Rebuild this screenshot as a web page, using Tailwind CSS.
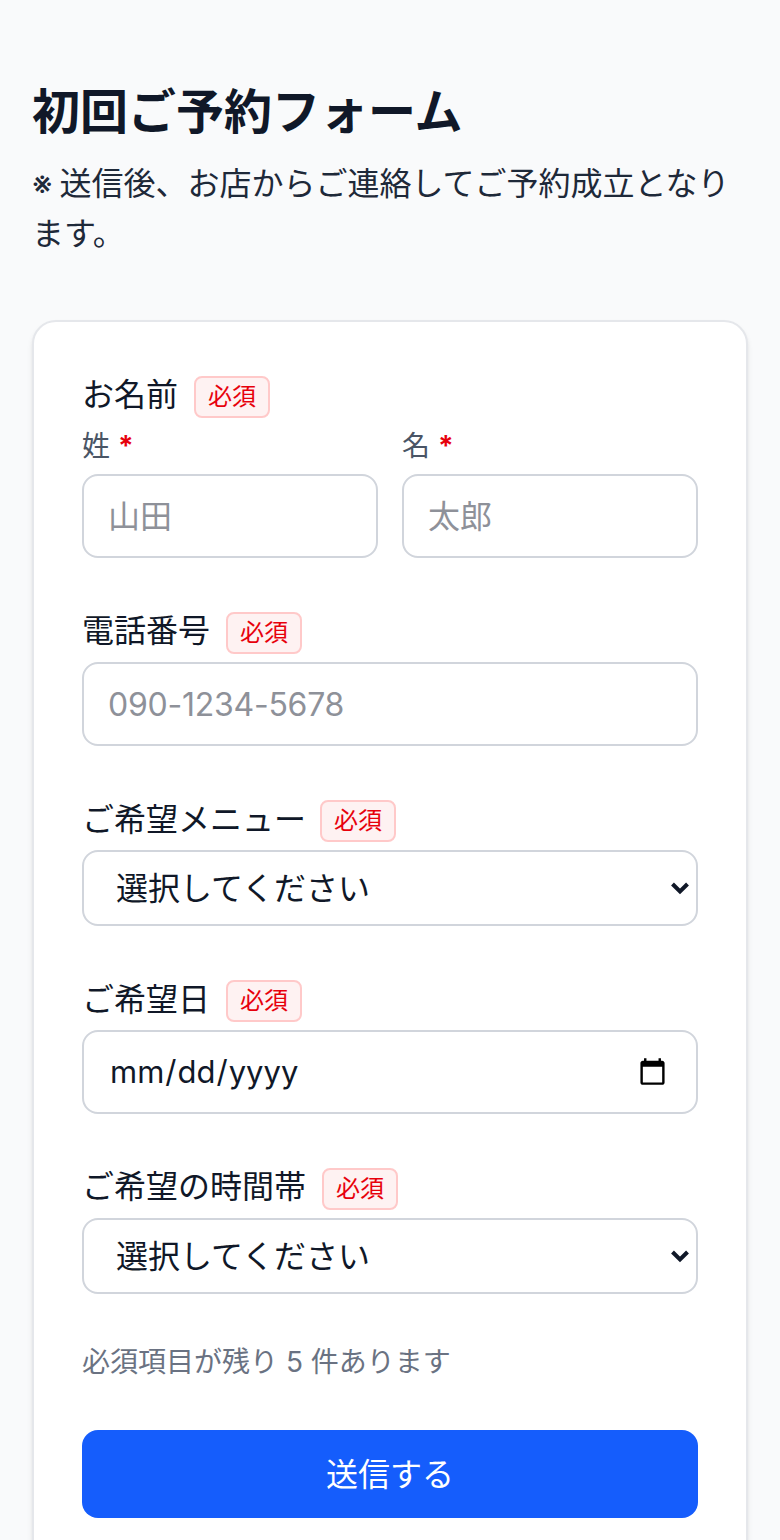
<!DOCTYPE html>
<html lang="ja">
<head>
  <meta charset="UTF-8" />
  <meta name="viewport" content="width=device-width, initial-scale=1.0"/>
  <title>初回ご予約フォーム</title>
  <script src="https://cdn.jsdelivr.net/npm/@tailwindcss/browser@4"></script>
</head>
<body class="bg-gray-50 h-[1540px] overflow-hidden font-['Inter','Noto_Sans_CJK_JP',sans-serif] text-gray-900">
  <main class="px-[32px] pt-[80px]">
    <!-- Heading -->
    <h1 class="text-[48px] leading-[64px] font-bold">初回ご予約フォーム</h1>
    <p class="mt-[15px] text-[32px] leading-[50px] text-gray-800 [word-spacing:-2px]">※ 送信後、お店からご連絡してご予約成立となります。</p>

    <!-- Form card -->
    <form class="mt-[61px] bg-white border-2 border-gray-200 rounded-[24px] shadow-md px-[48px] pt-[52px] pb-[48px]">
      <!-- Name -->
      <div class="flex items-center gap-[16px] h-[46px]">
        <span class="text-[32px] pb-[4px]">お名前</span>
        <span class="h-[42px] px-[12px] flex items-center text-[24px] text-red-600 bg-red-50 border-2 border-red-200 rounded-[8px]">必須</span>
      </div>
      <div class="grid grid-cols-2 gap-[24px] mt-[6px]">
        <div>
          <label class="block text-[28px] leading-[40px] text-gray-600">姓 <span class="font-bold text-red-600">*</span></label>
          <input type="text" placeholder="山田" class="mt-[8px] w-full h-[84px] px-[24px] text-[32px] bg-white border-2 border-gray-300 rounded-[16px] placeholder:text-[#8e9199]">
        </div>
        <div>
          <label class="block text-[28px] leading-[40px] text-gray-600">名 <span class="font-bold text-red-600">*</span></label>
          <input type="text" placeholder="太郎" class="mt-[8px] w-full h-[84px] px-[24px] text-[32px] bg-white border-2 border-gray-300 rounded-[16px] placeholder:text-[#8e9199]">
        </div>
      </div>

      <!-- Phone -->
      <div class="flex items-center gap-[16px] h-[46px] mt-[52px]">
        <span class="text-[32px] pb-[4px]">電話番号</span>
        <span class="h-[42px] px-[12px] flex items-center text-[24px] text-red-600 bg-red-50 border-2 border-red-200 rounded-[8px]">必須</span>
      </div>
      <input type="tel" placeholder="090-1234-5678" class="mt-[6px] w-full h-[84px] px-[24px] text-[32px] tracking-[-0.25px] bg-white border-2 border-gray-300 rounded-[16px] placeholder:text-[#8e9199]">

      <!-- Menu -->
      <div class="flex items-center gap-[14px] h-[46px] mt-[52px]">
        <span class="text-[32px] pb-[2px]">ご希望メニュー</span>
        <span class="h-[42px] px-[12px] flex items-center text-[24px] text-red-600 bg-red-50 border-2 border-red-200 rounded-[8px]">必須</span>
      </div>
      <div class="relative mt-[6px]">
        <select class="appearance-none w-full h-[76px] pl-[32px] pt-[2px] text-[32px] bg-white border-2 border-gray-300 rounded-[16px]">
          <option>選択してください</option>
        </select>
        <svg class="absolute right-[8px] top-[31px] w-[20px] h-[14px]" viewBox="0 0 20 14" fill="none"><path d="M2.5 3 10 10.500 17.500 3" stroke="#101828" stroke-width="4"/></svg>
      </div>

      <!-- Date -->
      <div class="flex items-center gap-[16px] h-[46px] mt-[52px]">
        <span class="text-[32px] pb-[2px]">ご希望日</span>
        <span class="h-[42px] px-[12px] flex items-center text-[24px] text-red-600 bg-red-50 border-2 border-red-200 rounded-[8px]">必須</span>
      </div>
      <input type="date" class="mt-[6px] block w-full h-[84px] pl-[25px] pr-[26px] pt-[1px] text-[31px] bg-white border-2 border-gray-300 rounded-[16px]">

      <!-- Time -->
      <div class="flex items-center gap-[16px] h-[46px] mt-[52px]">
        <span class="text-[32px] pb-[4px]">ご希望の時間帯</span>
        <span class="h-[42px] px-[12px] flex items-center text-[24px] text-red-600 bg-red-50 border-2 border-red-200 rounded-[8px]">必須</span>
      </div>
      <div class="relative mt-[6px]">
        <select class="appearance-none w-full h-[76px] pl-[32px] pt-[2px] text-[32px] bg-white border-2 border-gray-300 rounded-[16px]">
          <option>選択してください</option>
        </select>
        <svg class="absolute right-[8px] top-[31px] w-[20px] h-[14px]" viewBox="0 0 20 14" fill="none"><path d="M2.5 3 10 10.500 17.500 3" stroke="#101828" stroke-width="4"/></svg>
      </div>

      <p class="mt-[48px] text-[28px] leading-[40px] text-gray-500">必須項目が残り 5 件あります</p>

      <button type="button" class="mt-[48px] w-full h-[88px] pt-[2px] text-[32px] text-white bg-blue-600 rounded-[16px]">送信する</button>
    </form>
  </main>
</body>
</html>
